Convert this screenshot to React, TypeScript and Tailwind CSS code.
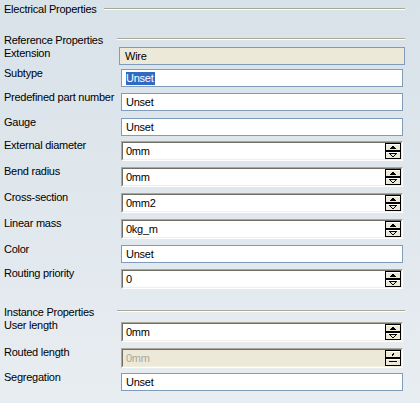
import React from "react";

function Spin({ disabled }: { disabled?: boolean }) {
  return (
    <div className="flex flex-col">
      <svg width="16" height="16" viewBox="0 0 16 16" shapeRendering="crispEdges">
        <rect x="0.5" y="0.5" width="15" height="7" fill="#ece9d8" stroke="#000" />
        <line x1="1" y1="1.5" x2="15" y2="1.5" stroke="#fff" />
        <rect x="0.5" y="8.5" width="15" height="7" fill="#ece9d8" stroke="#000" />
        <line x1="1" y1="9.5" x2="15" y2="9.5" stroke="#fff" />
        {disabled ? (
          <>
            <line x1="7" y1="5.5" x2="9" y2="3.5" stroke="#000" />
            <line x1="4" y1="11.5" x2="12" y2="11.5" stroke="#000" />
            <line x1="8" y1="12.5" x2="9" y2="12.5" stroke="#fff" />
          </>
        ) : (
          <>
            <polygon points="4.5,6 8,2.5 11.5,6" fill="#000" />
            <polygon points="4.5,10.5 11.5,10.5 8,14" fill="none" stroke="#000" strokeWidth="1" />
          </>
        )}
      </svg>
    </div>
  );
}

function TextField({ value, selected }: { value: string; selected?: boolean }) {
  return (
    <div className="mt-[2px] flex h-[18px] w-[282px] items-center border border-[#7f9db9] bg-white pl-[4px]">
      {selected ? (
        <span className="bg-[#316ac5] pr-[1px] leading-[13px] text-white">{value}</span>
      ) : (
        <span className="leading-[13px]">{value}</span>
      )}
    </div>
  );
}

function SpinField({ value, disabled, mt }: { value: string; disabled?: boolean; mt?: string }) {
  return (
    <div
      className={`${mt ?? "mt-[2px]"} h-[20px] w-[282px] border-t border-l border-b border-r border-t-[#aca899] border-l-[#aca899] border-b-white border-r-white`}
    >
      <div
        className={`flex h-full w-full items-center border-t border-l border-b border-r border-t-[#716f64] border-l-[#716f64] border-b-[#f1efe2] border-r-[#f1efe2] ${
          disabled ? "bg-[#ece9d8] text-[#aca899]" : "bg-white text-black"
        }`}
      >
        <span className="flex-1 pl-[3px] leading-[13px]">{value}</span>
        <Spin disabled={disabled} />
      </div>
    </div>
  );
}

function Label({ text }: { text: string }) {
  return <div className="w-[117px] shrink-0 whitespace-nowrap leading-[13px]">{text}</div>;
}

export default function App() {
  return (
    <div
      className="h-[403px] w-[420px] overflow-hidden bg-gradient-to-b from-[#d8e2e9] to-[#e8edf1] pl-[4px] pr-[15px] text-[11px] tracking-[-0.25px] text-black"
      style={{ fontFamily: '"Liberation Sans", Arial, sans-serif' }}
    >
      <div className="flex items-start pt-[3px]">
        <div className="whitespace-nowrap leading-[13px]">Electrical Properties</div>
        <div className="ml-[7px] mt-[5px] h-[2px] flex-1 border-t border-b border-t-[#aca899] border-b-white" />
      </div>

      <div className="mt-[18px] flex items-start">
        <div className="w-[113px] shrink-0 whitespace-nowrap leading-[13px]">Reference Properties</div>
        <div className="mt-[4px] h-[2px] flex-1 border-t border-b border-t-[#aca899] border-b-white" />
      </div>

      <div className="flex h-[20px] items-start">
        <Label text="Extension" />
        <div className="-ml-[2px] flex h-[18px] w-[286px] items-center border border-[#7f9db9] bg-[#ece9d8] pl-[5px]">
          <span className="leading-[13px]">Wire</span>
        </div>
      </div>

      <div className="flex h-[24px] items-start">
        <Label text="Subtype" />
        <TextField value="Unset" selected />
      </div>
      <div className="flex h-[25px] items-start">
        <Label text="Predefined part number" />
        <TextField value="Unset" />
      </div>
      <div className="flex h-[23px] items-start">
        <Label text="Gauge" />
        <TextField value="Unset" />
      </div>
      <div className="flex h-[26px] items-start">
        <Label text="External diameter" />
        <SpinField value="0mm" />
      </div>
      <div className="flex h-[26px] items-start">
        <Label text="Bend radius" />
        <SpinField value="0mm" />
      </div>
      <div className="flex h-[26px] items-start">
        <Label text="Cross-section" />
        <SpinField value="0mm2" />
      </div>
      <div className="flex h-[26px] items-start">
        <Label text="Linear mass" />
        <SpinField value="0kg_m" />
      </div>
      <div className="flex h-[24px] items-start">
        <Label text="Color" />
        <TextField value="Unset" />
      </div>
      <div className="flex h-[39px] items-start">
        <Label text="Routing priority" />
        <SpinField value="0" />
      </div>

      <div className="flex items-start">
        <div className="w-[113px] shrink-0 whitespace-nowrap leading-[13px]">Instance Properties</div>
        <div className="mt-[4px] h-[2px] flex-1 border-t border-b border-t-[#aca899] border-b-white" />
      </div>

      <div className="flex h-[27px] items-start">
        <Label text="User length" />
        <SpinField value="0mm" mt="mt-[3px]" />
      </div>
      <div className="flex h-[25px] items-start">
        <Label text="Routed length" />
        <SpinField value="0mm" disabled />
      </div>
      <div className="flex h-[25px] items-start">
        <Label text="Segregation" />
        <TextField value="Unset" />
      </div>
    </div>
  );
}
